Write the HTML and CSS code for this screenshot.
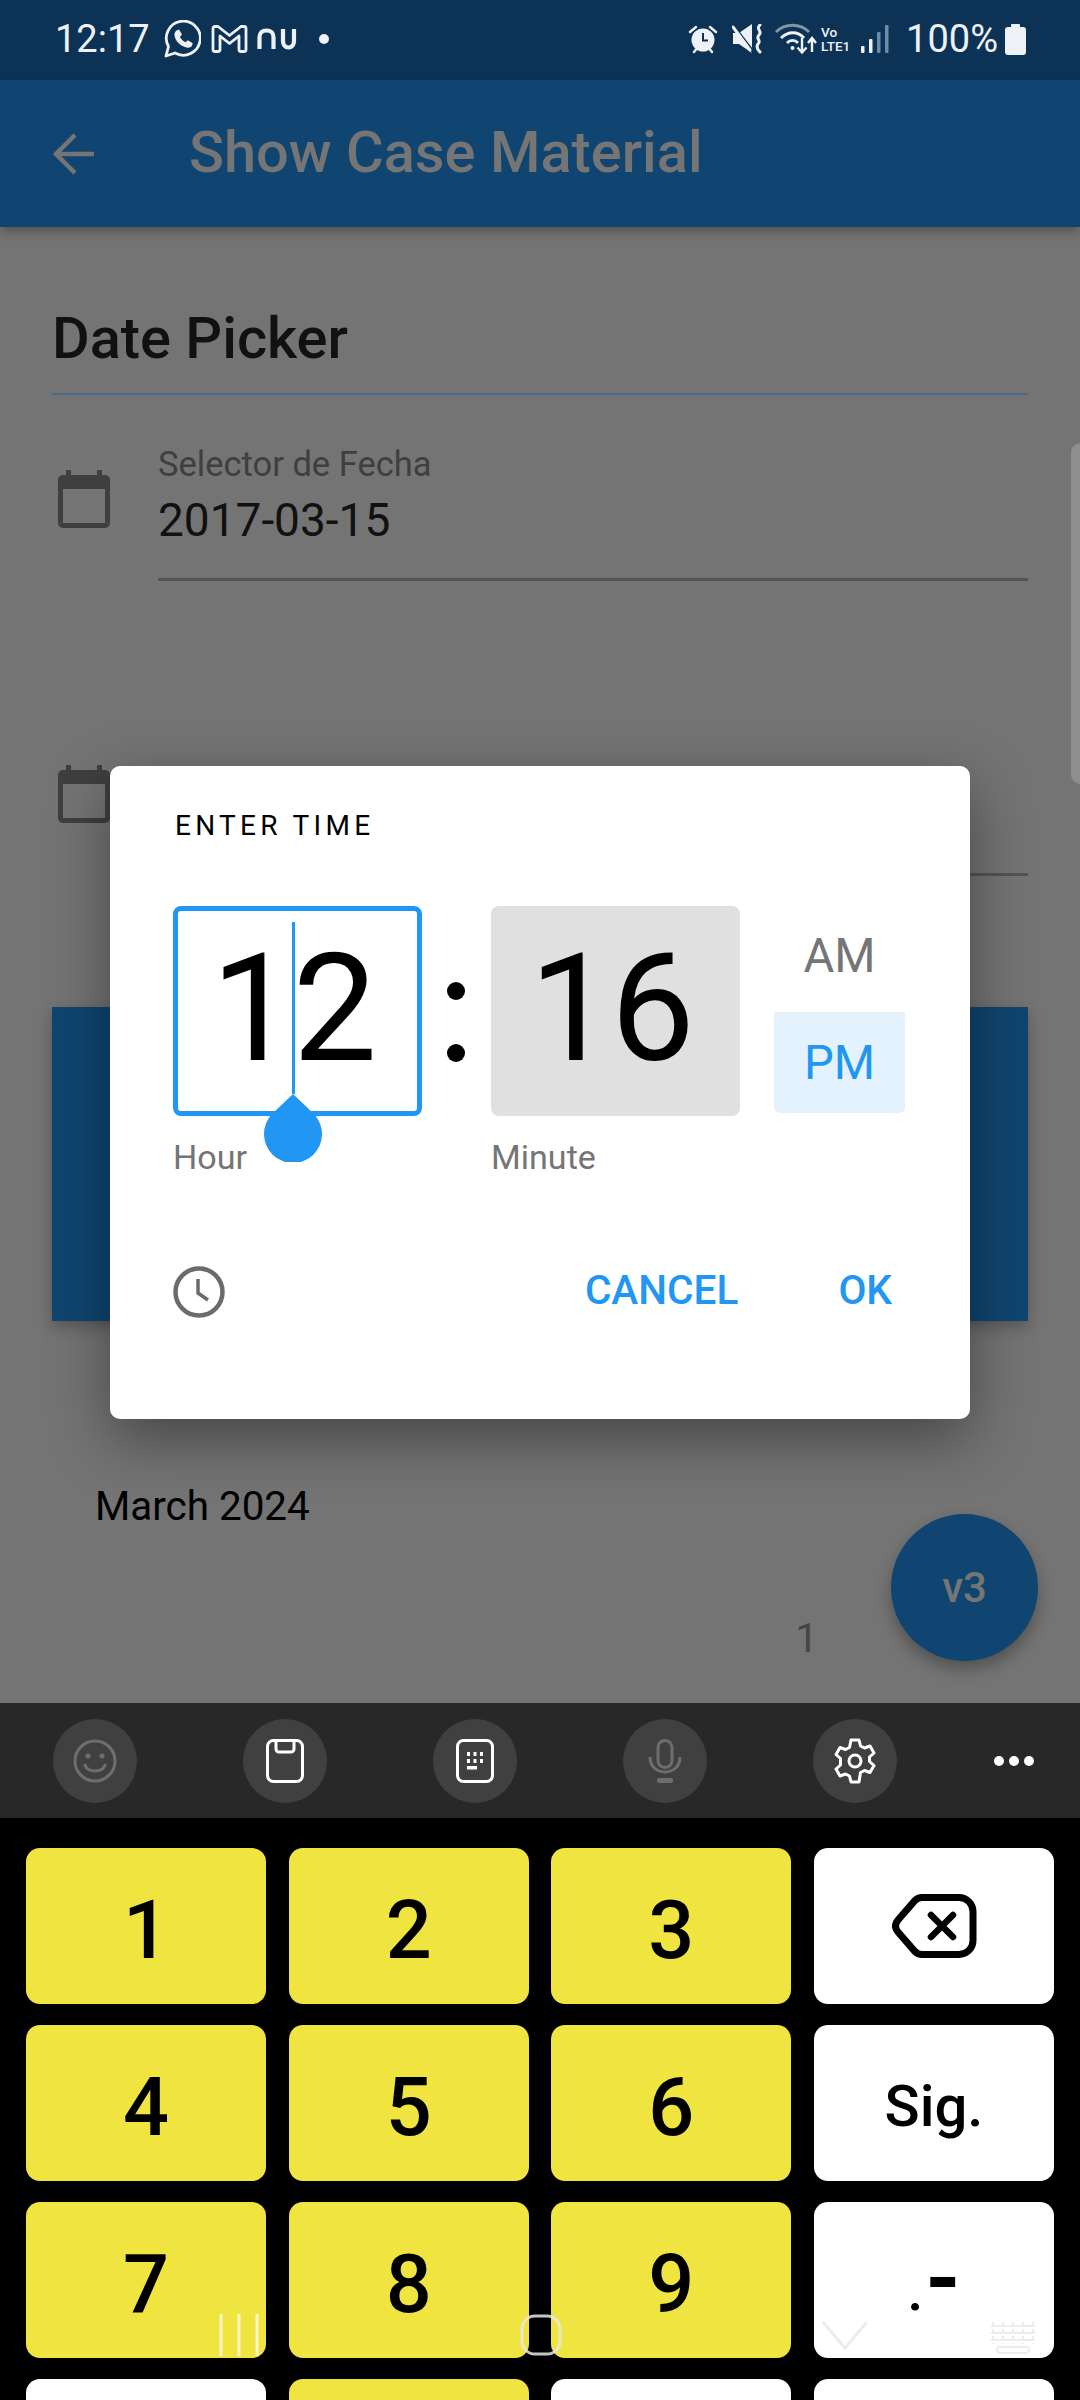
FILE: index.html
```html
<!DOCTYPE html>
<html lang="en">
<head>
    <meta charset="UTF-8">
    <meta name="viewport" content="width=device-width, initial-scale=1.0">
    <title>Show Case Material</title>
    <link rel="stylesheet" href="styles.css">
</head>
<body>
    <div class="status-bar">
        <div class="status-left">
            <span class="clock">12:17</span>
            <svg class="ic-whatsapp" viewBox="0 0 37 38" width="37" height="38"><path d="M2 36l2.500-9.500A17 17 0 1 1 11 33z" fill="none" stroke="#eef1f5" stroke-width="2.800" stroke-linejoin="round"/><path d="M12.500 10.500l2.500-1 3 5-2 2.300c1 2.400 3 4.400 5.500 5.500l2.300-2 5 3-1 2.700c-1 1.500-3.300 2-5.300 1.500-6.500-1.700-10.800-6-12-12-.4-2 .6-3.700 2-5z" fill="#eef1f5"/></svg>
            <svg class="ic-mail" viewBox="0 0 37 28" width="37" height="28"><path d="M2 3.500A2 2 0 0 1 4 1.500h3l11.500 9 11.500-9h3a2 2 0 0 1 2 2v21a2 2 0 0 1-2 2h-3a2 2 0 0 1-2-2V11l-9.500 7.500L9 11v13.500a2 2 0 0 1-2 2H4a2 2 0 0 1-2-2z" fill="none" stroke="#eef1f5" stroke-width="2.800" stroke-linejoin="round"/></svg>
            <svg class="ic-nu" viewBox="0 0 40 22" width="40" height="22"><path d="M2.500 21V9c0-4 2.500-6.500 7-6.500s7 2.500 7 6.500v12" fill="none" stroke="#eef1f5" stroke-width="4.200"/><path d="M26 1v12c0 4 2 6.500 5.500 6.500S37 17 37 13V1" fill="none" stroke="#eef1f5" stroke-width="4.200"/></svg>
            <span class="status-dot"></span>
        </div>
        <div class="status-right">
            <svg viewBox="0 0 30 30" width="30" height="30"><circle cx="15" cy="16" r="11.500" fill="#eef1f5"/><path d="M15 9v7.500h5" fill="none" stroke="#0c3355" stroke-width="2"/><path d="M2 8l6-5M28 8l-6-5M6 28l2-2.500M24 28l-2-2.500" stroke="#eef1f5" stroke-width="2.500" stroke-linecap="round"/></svg>
            <svg class="ic-mute" viewBox="0 0 32 30" width="32" height="30"><path d="M1 9h6l13-9v29L7 20H1z" fill="#eef1f5"/><path d="M0 0l22 29" stroke="#0c3355" stroke-width="3"/><path d="M1 3l17 23" stroke="#eef1f5" stroke-width="3" stroke-linecap="round"/><path d="M28 1c-5 4 3 6-1 10-4 4 3 5-1 9-1.500 2-1 5 2 8" fill="none" stroke="#eef1f5" stroke-width="3" stroke-linecap="round"/></svg>
            <svg class="ic-wifi" viewBox="0 0 44 32" width="44" height="32"><path d="M1 9C10 0 25 0 34 9" fill="none" stroke="#7f95a8" stroke-width="2.800"/><path d="M6 15C13 8 23 8 29 15M12 20c3-3.500 8-3.500 11 0" fill="none" stroke="#eef1f5" stroke-width="2.800"/><circle cx="17.500" cy="25" r="2" fill="#eef1f5"/><path d="M27 15v14M22.500 24.500l4.500 5 4.500-5M37 29V15M33 20l4-5 4 5" fill="none" stroke="#eef1f5" stroke-width="2.400"/></svg>
            <span class="volte">Vo<br>LTE1</span>
            <svg class="ic-signal" viewBox="0 0 28 30" width="28" height="30"><rect x="0" y="22" width="3.500" height="7" rx="1" fill="#eef1f5"/><rect x="8" y="15" width="3.500" height="14" rx="1" fill="#eef1f5"/><rect x="16" y="8" width="3.500" height="21" rx="1" fill="#6f8ba3"/><rect x="24" y="1" width="3.500" height="28" rx="1" fill="#6f8ba3"/></svg>
            <span class="battery-text">100%</span>
            <svg class="ic-battery" viewBox="0 0 21 32" width="21" height="32"><path d="M6 2a1 1 0 0 1 1-1h7a1 1 0 0 1 1 1v2h3a3 3 0 0 1 3 3v22a3 3 0 0 1-3 3H3a3 3 0 0 1-3-3V7a3 3 0 0 1 3-3h3z" fill="#eef1f5"/></svg>
        </div>
    </div>

    <div class="app-bar">
        <svg class="ic-back" viewBox="0 0 44 44" width="44" height="44"><path d="M42 22H5M23 3L4 22l19 19" fill="none" stroke="#757575" stroke-width="4.500"/></svg>
        <span class="app-title">Show Case Material</span>
    </div>

    <div class="content">
        <h1 class="section-title">Date Picker</h1>

        <div class="field">
            <svg class="ic-calendar" viewBox="0 0 52 58" width="52" height="58"><path d="M10.500 0v6M41.500 0v6" stroke="#3f3f3f" stroke-width="5"/><path d="M5 5h42a5 5 0 0 1 5 5v43a5 5 0 0 1-5 5H5a5 5 0 0 1-5-5V10a5 5 0 0 1 5-5zm0 14v34h42V19z" fill="#3f3f3f" fill-rule="evenodd"/></svg>
            <div class="field-body">
                <div class="field-label">Selector de Fecha</div>
                <div class="field-value">2017-03-15</div>
            </div>
        </div>

        <div class="field field-second">
            <svg class="ic-calendar" viewBox="0 0 52 58" width="52" height="58"><path d="M10.500 0v6M41.500 0v6" stroke="#3f3f3f" stroke-width="5"/><path d="M5 5h42a5 5 0 0 1 5 5v43a5 5 0 0 1-5 5H5a5 5 0 0 1-5-5V10a5 5 0 0 1 5-5zm0 14v34h42V19z" fill="#3f3f3f" fill-rule="evenodd"/></svg>
            <div class="field-body field-body-empty"></div>
        </div>

        <div class="calendar-head"></div>
        <div class="month">March 2024</div>
        <div class="day-row"><span class="day">1</span></div>

        <div class="scroll-thumb"></div>
        <div class="fab">v3</div>
    </div>

    <div class="kb-toolbar">
        <span class="tool tool-off"><svg viewBox="0 0 44 44" width="44" height="44"><circle cx="22" cy="22" r="20" fill="none" stroke="#6e6e6e" stroke-width="3"/><circle cx="15" cy="17" r="2.500" fill="#6e6e6e"/><circle cx="29" cy="17" r="2.500" fill="#6e6e6e"/><path d="M12 26c3 8 17 8 20 0" fill="none" stroke="#6e6e6e" stroke-width="3" stroke-linecap="round"/></svg></span>
        <span class="tool"><svg viewBox="0 0 38 44" width="38" height="44"><rect x="1.500" y="1.500" width="35" height="41" rx="6" fill="none" stroke="#fff" stroke-width="3"/><path d="M10 2v8a3 3 0 0 0 3 3h12a3 3 0 0 0 3-3V2" fill="none" stroke="#fff" stroke-width="3"/></svg></span>
        <span class="tool"><svg viewBox="0 0 38 44" width="38" height="44"><rect x="1.500" y="1.500" width="35" height="41" rx="6" fill="none" stroke="#fff" stroke-width="3"/><g fill="#fff"><rect x="11" y="13" width="3" height="4"/><rect x="17.500" y="13" width="3" height="4"/><rect x="24" y="13" width="3" height="4"/><rect x="11" y="20" width="3" height="4"/><rect x="17.500" y="20" width="3" height="4"/><rect x="24" y="20" width="3" height="4"/><rect x="11" y="27" width="10" height="3.500"/></g></svg></span>
        <span class="tool tool-off"><svg viewBox="0 0 34 44" width="34" height="44"><rect x="10" y="1.500" width="14" height="27" rx="7" fill="none" stroke="#6e6e6e" stroke-width="3"/><path d="M2 18c0 20 30 20 30 0" fill="none" stroke="#6e6e6e" stroke-width="3"/><rect x="9" y="39" width="16" height="5" rx="2" fill="#6e6e6e"/></svg></span>
        <span class="tool"><svg viewBox="0 0 44 46" width="44" height="46"><path d="M18 2h8l1.500 6 4 2 5.500-2 4 7-4.500 4v4.500l4.500 4-4 7-5.500-2-4 2L26 44h-8l-1.500-6-4-2-5.500 2-4-7 4.500-4V20.500L3 16.500l4-7 5.500 2 4-2z" fill="none" stroke="#fff" stroke-width="3" stroke-linejoin="round"/><circle cx="22" cy="23" r="6" fill="none" stroke="#fff" stroke-width="3"/></svg></span>
        <span class="tool-more"><i></i><i></i><i></i></span>
    </div>

    <div class="keyboard">
        <div class="key key-num">1</div>
        <div class="key key-num">2</div>
        <div class="key key-num">3</div>
        <div class="key"><svg viewBox="0 0 85 64" width="85" height="64"><path d="M30 3.500H67a14 14 0 0 1 14 14v29a14 14 0 0 1-14 14H30a10 10 0 0 1-7-3L6 38q-5-6 0-12L23 6.500a10 10 0 0 1 7-3z" fill="none" stroke="#000" stroke-width="7"/><path d="M39 21l22 22M61 21L39 43" stroke="#000" stroke-width="6.500" stroke-linecap="round"/></svg></div>
        <div class="key key-num">4</div>
        <div class="key key-num">5</div>
        <div class="key key-num">6</div>
        <div class="key key-text">Sig.</div>
        <div class="key key-num">7</div>
        <div class="key key-num">8</div>
        <div class="key key-num">9</div>
        <div class="key key-text key-punct">.<span class="punct-dash">-</span></div>
        <div class="key"></div>
        <div class="key key-num"></div>
        <div class="key"></div>
        <div class="key"></div>
    </div>

    <div class="nav-overlay">
        <svg class="nav-recent" viewBox="0 0 42 44" width="42" height="44"><path d="M3 1v42M21 1v42M39 1v42" stroke="#fff" stroke-opacity=".7" stroke-width="3"/></svg>
        <svg class="nav-home" viewBox="0 0 42 42" width="42" height="42"><rect x="2" y="2" width="38" height="38" rx="13" fill="none" stroke="#e8e8e8" stroke-opacity=".85" stroke-width="3"/></svg>
        <svg class="nav-down" viewBox="0 0 48 30" width="48" height="30"><path d="M2 2l22 26L46 2" fill="none" stroke="#ececec" stroke-width="3"/></svg>
        <svg class="nav-kb" viewBox="0 0 52 34" width="52" height="34"><g fill="none" stroke="#ececec" stroke-width="2"><path d="M4 6h44M4 13h44M4 20h44"/><path d="M6 2v22M16 2v22M26 2v22M36 2v22M46 2v22" stroke-dasharray="4 3"/><rect x="10" y="27" width="32" height="6" rx="3"/></g></svg>
    </div>

    <div class="dialog">
        <div class="dialog-title">ENTER TIME</div>
        <div class="time-row">
            <div class="time-col">
                <div class="time-box time-box-active">
                    <span>1</span><span class="caret"></span><span>2</span>
                    <svg class="caret-handle" viewBox="0 0 58 68" width="58" height="68"><path d="M29 0L50 20A29 29 0 1 1 8 20z" fill="#2196f3"/></svg>
                </div>
                <div class="time-label">Hour</div>
            </div>
            <div class="time-sep"><i></i><i></i></div>
            <div class="time-col">
                <div class="time-box time-box-idle">16</div>
                <div class="time-label">Minute</div>
            </div>
            <div class="ampm">
                <div class="ampm-item ampm-off">AM</div>
                <div class="ampm-item ampm-on">PM</div>
            </div>
        </div>
        <div class="dialog-actions">
            <svg class="ic-clock" viewBox="0 0 52 52" width="52" height="52"><circle cx="26" cy="26" r="23.500" fill="none" stroke="#6b6b6b" stroke-width="4.500"/><path d="M25 13v14l10 7" fill="none" stroke="#6b6b6b" stroke-width="3.500"/></svg>
            <span class="action action-cancel">CANCEL</span>
            <span class="action">OK</span>
        </div>
    </div>
</body>
</html>
```

FILE: styles.css
```css
* {
    box-sizing: border-box;
}
html, body {
    margin: 0;
    padding: 0;
}
body {
    position: relative;
    width: 1080px;
    height: 2400px;
    overflow: hidden;
    background-color: #747474;
    font-family: Roboto, "Liberation Sans", sans-serif;
    display: flex;
    flex-direction: column;
}

/* status bar */
.status-bar {
    height: 80px;
    flex: none;
    background-color: #0c3355;
    color: #eef1f5;
    display: flex;
    justify-content: space-between;
    align-items: center;
    padding: 0 54px 2px 55px;
}
.status-left, .status-right {
    display: flex;
    align-items: center;
}
.clock {
    font-size: 38px;
    width: 109px;
}
.ic-mail {
    margin-left: 10px;
}
.ic-nu {
    margin-left: 9px;
}
.status-dot {
    width: 10px;
    height: 10px;
    border-radius: 50%;
    background-color: #eef1f5;
    margin-left: 22px;
}
.ic-mute {
    margin-left: 14px;
}
.ic-wifi {
    margin-left: 11px;
}
.volte {
    font-size: 13.500px;
    font-weight: 500;
    line-height: 14px;
    width: 32px;
    margin-left: 2px;
}
.ic-signal {
    margin-left: 8px;
}
.battery-text {
    font-size: 38px;
    margin-left: 17px;
}
.ic-battery {
    margin-left: 7px;
}

/* app bar */
.app-bar {
    height: 147px;
    flex: none;
    background-color: #0f4570;
    box-shadow: 0 4px 10px rgba(0, 0, 0, 0.3);
    display: flex;
    align-items: center;
    padding-left: 52px;
    position: relative;
    z-index: 1;
}
.app-title {
    color: #757575;
    font-size: 57.750px;
    font-weight: 500;
    margin-left: 93px;
    padding-bottom: 3px;
}

/* page behind the dialog */
.content {
    position: relative;
    height: 1476px;
    flex: none;
    padding: 0 52px;
}
.section-title {
    margin: 0;
    height: 168px;
    padding-top: 79px;
    border-bottom: 2px solid #4a6a8a;
    color: #111;
    font-size: 57.750px;
    font-weight: 500;
    line-height: 64px;
}
.field {
    display: flex;
    align-items: flex-start;
}
.ic-calendar {
    flex: none;
    margin: 75px 0 0 6px;
}
.field-body {
    flex: 1;
    margin-left: 48px;
    height: 186px;
    padding-top: 46px;
    border-bottom: 3px solid #545454;
}
.field-label {
    color: #3f3f3f;
    font-size: 34.500px;
    line-height: 46px;
}
.field-value {
    color: #111;
    font-size: 46px;
    line-height: 64px;
    margin-top: 1px;
}
.field-second {
    height: 295px;
}
.field-second .ic-calendar {
    margin-top: 184px;
}
.field-body-empty {
    height: 100%;
}
.calendar-head {
    height: 314px;
    margin-top: 131px;
    background-color: #0f4570;
    box-shadow: 0 6px 14px rgba(0, 0, 0, 0.25);
}
.month {
    color: #000;
    font-size: 40.400px;
    line-height: 50px;
    margin: 161px 0 0 43px;
}
.day-row {
    display: flex;
    justify-content: flex-end;
    padding-right: 210px;
    margin-top: 81px;
}
.day {
    color: #444;
    font-size: 40.600px;
    line-height: 50px;
}
.scroll-thumb {
    position: absolute;
    right: 0;
    top: 216px;
    width: 9px;
    height: 341px;
    background-color: #8e8e8e;
    border-radius: 9px 0 0 9px;
}
.fab {
    position: absolute;
    left: 891px;
    top: 1287px;
    width: 147px;
    height: 147px;
    border-radius: 50%;
    background-color: #0f4570;
    color: #757575;
    font-size: 42px;
    font-weight: 500;
    display: flex;
    align-items: center;
    justify-content: center;
    box-shadow: 0 8px 16px rgba(0, 0, 0, 0.3);
}

/* keyboard */
.kb-toolbar {
    height: 115px;
    flex: none;
    background-color: #282828;
    display: flex;
    align-items: center;
    padding: 0 0 0 53px;
    gap: 106px;
}
.tool {
    width: 84px;
    height: 84px;
    flex: none;
    border-radius: 50%;
    background-color: #404040;
    display: flex;
    align-items: center;
    justify-content: center;
}
.tool-more {
    display: flex;
    gap: 5px;
    margin-left: -9px;
}
.tool-more i {
    width: 10px;
    height: 10px;
    border-radius: 50%;
    background-color: #fff;
}
.keyboard {
    flex: 1;
    background-color: #000;
    display: grid;
    grid-template-columns: repeat(4, 1fr);
    grid-auto-rows: 156px;
    gap: 21px 22.700px;
    padding: 30px 26px 0;
    overflow: hidden;
}
.key {
    background-color: #fff;
    border-radius: 14px;
    color: #000;
    display: flex;
    align-items: center;
    justify-content: center;
}
.key-num {
    background-color: #f0e441;
    font-size: 81px;
    font-weight: 500;
    padding-top: 8px;
}
.key-text {
    font-size: 58px;
    font-weight: 500;
    padding-top: 6px;
}
.key-punct {
    align-items: baseline;
    padding: 0 0 10px;
    line-height: 156px;
}
.punct-dash {
    font-size: 90px;
    font-weight: 700;
    margin-left: 2px;
}

/* translucent nav buttons over the keyboard */
.nav-overlay {
    position: absolute;
    left: 0;
    top: 2310px;
    width: 1080px;
    height: 50px;
}
.nav-overlay svg {
    position: absolute;
}
.nav-recent {
    left: 218px;
    top: 3px;
}
.nav-home {
    left: 520px;
    top: 4px;
}
.nav-down {
    left: 821px;
    top: 10px;
}
.nav-kb {
    left: 987px;
    top: 10px;
}

/* time picker dialog */
.dialog {
    position: absolute;
    left: 110px;
    top: 766px;
    width: 860px;
    height: 653px;
    background-color: #fff;
    border-radius: 10px;
    box-shadow: 0 20px 60px rgba(0, 0, 0, 0.4);
    padding: 0 63px;
}
.dialog-title {
    padding: 40px 0 0 2px;
    height: 140px;
    color: #000;
    font-size: 28px;
    letter-spacing: 4.300px;
    line-height: 40px;
}
.time-row {
    display: flex;
    align-items: flex-start;
}
.time-col {
    width: 249px;
    flex: none;
}
.time-box {
    position: relative;
    height: 210px;
    border-radius: 8px;
    color: #000;
    font-size: 150px;
    display: flex;
    align-items: center;
    justify-content: center;
    padding-bottom: 4px;
}
.time-box-active {
    border: 5px solid #2196f3;
    padding-right: 7px;
}
.time-box-idle {
    background-color: #e0e0e0;
    letter-spacing: -3px;
    padding-right: 10px;
}
.caret {
    width: 3.500px;
    height: 172px;
    background-color: #2196f3;
    margin: 0 -2.500px 2px -3.500px;
}
.caret-handle {
    position: absolute;
    left: 86px;
    top: 183px;
}
.time-label {
    color: #757575;
    font-size: 34.100px;
    line-height: 50px;
    margin-top: 16px;
}
.time-sep {
    width: 67px;
    flex: none;
    height: 210px;
    display: flex;
    flex-direction: column;
    align-items: center;
    justify-content: center;
    gap: 44px;
    padding-top: 22px;
    margin-right: 2px;
}
.time-sep i {
    width: 18px;
    height: 18px;
    border-radius: 50%;
    background-color: #000;
}
.ampm {
    width: 131px;
    flex: none;
    margin-left: 34px;
}
.ampm-item {
    height: 106px;
    color: #757575;
    font-size: 47.250px;
    display: flex;
    align-items: center;
    justify-content: center;
}
.ampm-off {
    padding-bottom: 7px;
}
.ampm-on {
    background-color: #e3f2fd;
    color: #2196f3;
    border-radius: 0 0 6px 6px;
    height: 101px;
}
.dialog-actions {
    display: flex;
    align-items: center;
    margin-top: 84px;
}
.ic-clock {
    margin-right: auto;
}
.action {
    color: #2196f3;
    font-size: 40.600px;
    font-weight: 500;
    margin-right: 15px;
    padding-bottom: 4px;
}
.action-cancel {
    margin-right: 100px;
}
```
